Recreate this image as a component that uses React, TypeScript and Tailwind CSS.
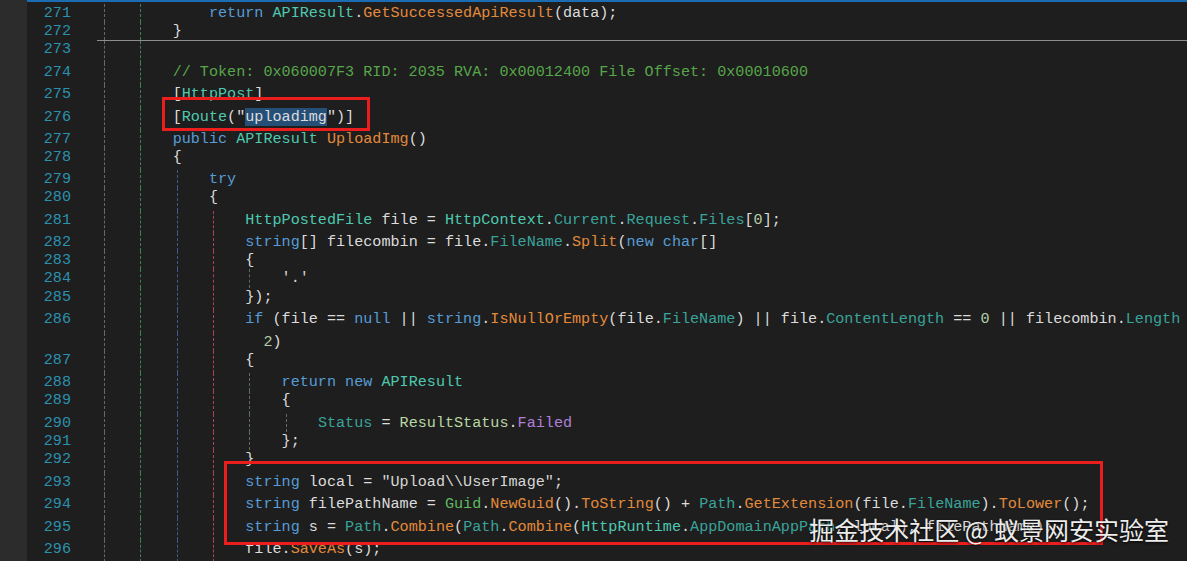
import React from 'react'

// token colour classes
const C: Record<string, string> = {
  w: 'text-[#dcdcdc]',
  k: 'text-[#569cd6]',
  t: 'text-[#4ec9b0]',
  g: 'text-[#5fb761]',
  m: 'text-[#e38a3a]',
  p: 'text-[#3aa39a]',
  e: 'text-[#b07fd8]',
  en: 'text-[#b8d7a3]',
  c: 'text-[#57a64a]',
  n: 'text-[#b5cea8]',
  s: 'text-[#d6d6d6]',
  sel: 'text-[#dcdcdc] bg-[#264f78]',
}

const G = [
  'border-[#676767]',
  'border-[#3f7f58]',
  'border-[#45598a]',
  'border-[#b0424f]',
  'border-[#596e5c]',
  'border-[#6a6a6a]',
]

type Tok = [string, string]
type Row = {
  no?: number
  h: string
  level: number
  guides: number
  sep?: boolean
  toks: Tok[]
}

const rows: Row[] = [
  { no: 271, h: 'h-[18px]', level: 3, guides: 2, toks: [['return', 'k'], [' ', 'w'], ['APIResult', 't'], ['.', 'w'], ['GetSuccessedApiResult', 'm'], ['(data);', 'w']] },
  { no: 272, h: 'h-[18px]', level: 2, guides: 2, toks: [['}', 'w']] },
  { no: 273, h: 'h-[23px]', level: 2, guides: 2, sep: true, toks: [] },
  { no: 274, h: 'h-[22px]', level: 2, guides: 2, toks: [['// Token: 0x060007F3 RID: 2035 RVA: 0x00012400 File Offset: 0x00010600', 'c']] },
  { no: 275, h: 'h-[23px]', level: 2, guides: 2, toks: [['[', 'w'], ['HttpPost', 't'], [']', 'w']] },
  { no: 276, h: 'h-[22px]', level: 2, guides: 2, toks: [['[', 'w'], ['Route', 't'], ['("', 'w'], ['uploadimg', 'sel'], ['")]', 'w']] },
  { no: 277, h: 'h-[18px]', level: 2, guides: 2, toks: [['public', 'k'], [' ', 'w'], ['APIResult', 't'], [' ', 'w'], ['UploadImg', 'm'], ['()', 'w']] },
  { no: 278, h: 'h-[22px]', level: 2, guides: 2, toks: [['{', 'w']] },
  { no: 279, h: 'h-[18px]', level: 3, guides: 3, toks: [['try', 'k']] },
  { no: 280, h: 'h-[23px]', level: 3, guides: 3, toks: [['{', 'w']] },
  { no: 281, h: 'h-[22px]', level: 4, guides: 4, toks: [['HttpPostedFile', 't'], [' file = ', 'w'], ['HttpContext', 't'], ['.', 'w'], ['Current', 'p'], ['.', 'w'], ['Request', 'p'], ['.', 'w'], ['Files', 'p'], ['[', 'w'], ['0', 'n'], ['];', 'w']] },
  { no: 282, h: 'h-[18px]', level: 4, guides: 4, toks: [['string', 'k'], ['[] filecombin = file.', 'w'], ['FileName', 'p'], ['.', 'w'], ['Split', 'm'], ['(', 'w'], ['new', 'k'], [' ', 'w'], ['char', 'k'], ['[]', 'w']] },
  { no: 283, h: 'h-[18px]', level: 4, guides: 4, toks: [['{', 'w']] },
  { no: 284, h: 'h-[19px]', level: 5, guides: 5, toks: [["'.'", 's']] },
  { no: 285, h: 'h-[22px]', level: 4, guides: 4, toks: [['});', 'w']] },
  { no: 286, h: 'h-[23px]', level: 4, guides: 4, toks: [['if', 'k'], [' (file == ', 'w'], ['null', 'k'], [' || ', 'w'], ['string', 'k'], ['.', 'w'], ['IsNullOrEmpty', 'm'], ['(file.', 'w'], ['FileName', 'p'], [') || file.', 'w'], ['ContentLength', 'p'], [' == ', 'w'], ['0', 'n'], [' || filecombin.', 'w'], ['Length', 'p'], [' <', 'w']] },
  { h: 'h-[18px]', level: 4, guides: 4, toks: [['  ', 'w'], ['2', 'n'], [')', 'w']] },
  { no: 287, h: 'h-[22px]', level: 4, guides: 4, toks: [['{', 'w']] },
  { no: 288, h: 'h-[18px]', level: 5, guides: 5, toks: [['return', 'k'], [' ', 'w'], ['new', 'k'], [' ', 'w'], ['APIResult', 't']] },
  { no: 289, h: 'h-[23px]', level: 5, guides: 5, toks: [['{', 'w']] },
  { no: 290, h: 'h-[18px]', level: 6, guides: 6, toks: [['Status', 'p'], [' = ', 'w'], ['ResultStatus', 'en'], ['.', 'w'], ['Failed', 'e']] },
  { no: 291, h: 'h-[18px]', level: 5, guides: 5, toks: [['};', 'w']] },
  { no: 292, h: 'h-[23px]', level: 4, guides: 4, toks: [['}', 'w']] },
  { no: 293, h: 'h-[22px]', level: 4, guides: 4, toks: [['string', 'k'], [' local = ', 'w'], ['"Upload\\\\UserImage"', 's'], [';', 'w']] },
  { no: 294, h: 'h-[23px]', level: 4, guides: 4, toks: [['string', 'k'], [' filePathName = ', 'w'], ['Guid', 'g'], ['.', 'w'], ['NewGuid', 'm'], ['().', 'w'], ['ToString', 'm'], ['() + ', 'w'], ['Path', 'p'], ['.', 'w'], ['GetExtension', 'm'], ['(file.', 'w'], ['FileName', 'p'], [').', 'w'], ['ToLower', 'm'], ['();', 'w']] },
  { no: 295, h: 'h-[22px]', level: 4, guides: 4, toks: [['string', 'k'], [' s = ', 'w'], ['Path', 'p'], ['.', 'w'], ['Combine', 'm'], ['(', 'w'], ['Path', 'p'], ['.', 'w'], ['Combine', 'm'], ['(', 'w'], ['HttpRuntime', 't'], ['.', 'w'], ['AppDomainAppPath', 'p'], [', local), filePathName);', 'w']] },
  { no: 296, h: 'h-[22px]', level: 4, guides: 4, toks: [['file.', 'w'], ['SaveAs', 'm'], ['(s);', 'w']] },
]

function CodeRow({ row }: { row: Row }) {
  return (
    <div className={`flex shrink-0 ${row.h}`}>
      <div className="w-[44px] shrink-0 text-right leading-[18px] text-[#2b91af]">{row.no ?? ''}</div>
      <div className="w-[26px] shrink-0" />
      <div className={`flex flex-1 pl-[3px] ${row.sep ? 'border-t border-[#8c8c8c]' : ''}`}>
        {Array.from({ length: row.level }).map((_, i) => (
          <span key={i} className="h-full w-[36.32px] shrink-0 pl-[4px]">
            {i < row.guides && <span className={`block h-full border-l border-dashed ${G[i]}`} />}
          </span>
        ))}
        <span className="whitespace-pre leading-[18px]">
          {row.toks.map(([text, c], i) => (
            <span key={i} className={C[c]}>
              {text}
            </span>
          ))}
        </span>
      </div>
    </div>
  )
}

export default function App() {
  return (
    <div className="relative flex h-[561px] w-[1187px] overflow-hidden bg-[#1e1e1e] font-['Liberation_Mono',monospace] text-[15.13px]">
      <div className="h-full w-[27px] shrink-0 bg-[#2c2c2c]" />
      <div className="flex h-full flex-1 flex-col overflow-hidden border-t-2 border-[#1c6cb3] pt-[2px]">
        {rows.map((r, i) => (
          <CodeRow key={i} row={r} />
        ))}
      </div>

      {/* highlight boxes */}
      <div className="absolute left-[162px] top-[97px] h-[34px] w-[208px] border-[3px] border-[#ec1d1d]" />
      <div className="absolute left-[224px] top-[461px] h-[84px] w-[879px] border-[3px] border-[#ec1d1d]" />

      {/* watermark */}
      <div className="absolute right-[18px] top-[513px] font-['Noto_Sans_CJK_SC',sans-serif] text-[25px] leading-[32px] text-[#ececec] [text-shadow:0_1px_3px_rgba(0,0,0,0.9)]">
        掘金技术社区 @ 蚁景网安实验室
      </div>
    </div>
  )
}
